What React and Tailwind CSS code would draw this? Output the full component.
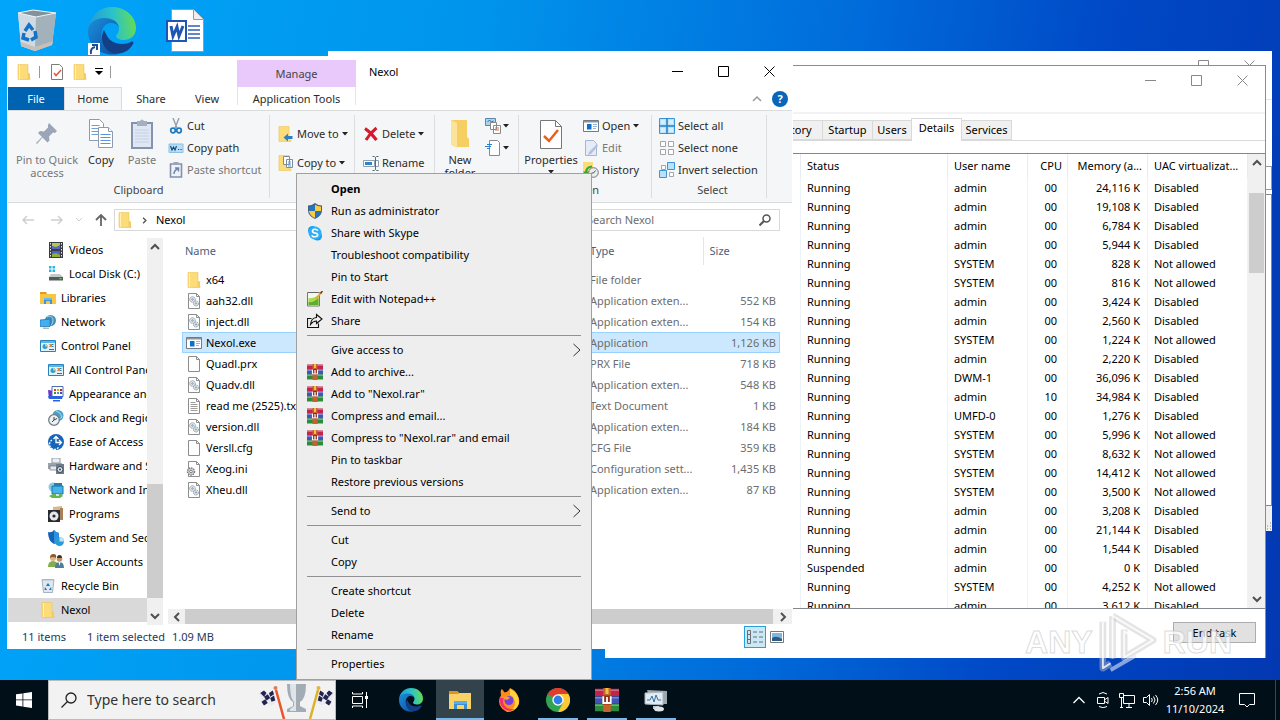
const NAV = [
  { label: "Videos",         icon: "videos",   sub: true },
  { label: "Local Disk (C:)", icon: "disk",    sub: true },
  { label: "Libraries",      icon: "libraries" },
  { label: "Network",        icon: "network" },
  { label: "Control Panel",  icon: "panel" },
  { label: "All Control Panel Items", icon: "panel", sub: true },
  { label: "Appearance and Personalization", icon: "appearance", sub: true },
  { label: "Clock and Region", icon: "clock",  sub: true },
  { label: "Ease of Access", icon: "ease",     sub: true },
  { label: "Hardware and Sound", icon: "hardware", sub: true },
  { label: "Network and Internet", icon: "internet", sub: true },
  { label: "Programs",       icon: "programs", sub: true },
  { label: "System and Security", icon: "shield2", sub: true },
  { label: "User Accounts",  icon: "users",    sub: true },
  { label: "Recycle Bin",    icon: "bin" },
  { label: "Nexol",          icon: "folder",   active: true },
];

const FILES = [
  ["x64", "folder", "File folder", ""],
  ["aah32.dll", "dll", "Application exten...", "552 KB"],
  ["inject.dll", "dll", "Application exten...", "154 KB"],
  ["Nexol.exe", "exe", "Application", "1,126 KB"],
  ["Quadl.prx", "blank", "PRX File", "718 KB"],
  ["Quadv.dll", "dll", "Application exten...", "548 KB"],
  ["read me (2525).txt", "txt", "Text Document", "1 KB"],
  ["version.dll", "dll", "Application exten...", "184 KB"],
  ["Versll.cfg", "blank", "CFG File", "359 KB"],
  ["Xeog.ini", "ini", "Configuration sett...", "1,435 KB"],
  ["Xheu.dll", "dll", "Application exten...", "87 KB"],
];

const PROCESSES = [
  ["Running", "admin", "00", "24,116 K", "Disabled"],
  ["Running", "admin", "00", "19,108 K", "Disabled"],
  ["Running", "admin", "00", "6,784 K", "Disabled"],
  ["Running", "admin", "00", "5,944 K", "Disabled"],
  ["Running", "SYSTEM", "00", "828 K", "Not allowed"],
  ["Running", "SYSTEM", "00", "816 K", "Not allowed"],
  ["Running", "admin", "00", "3,424 K", "Disabled"],
  ["Running", "admin", "00", "2,560 K", "Disabled"],
  ["Running", "SYSTEM", "00", "1,224 K", "Not allowed"],
  ["Running", "admin", "00", "2,220 K", "Disabled"],
  ["Running", "DWM-1", "00", "36,096 K", "Disabled"],
  ["Running", "admin", "10", "34,984 K", "Disabled"],
  ["Running", "UMFD-0", "00", "1,276 K", "Disabled"],
  ["Running", "SYSTEM", "00", "5,996 K", "Not allowed"],
  ["Running", "SYSTEM", "00", "8,632 K", "Not allowed"],
  ["Running", "SYSTEM", "00", "14,412 K", "Not allowed"],
  ["Running", "SYSTEM", "00", "3,500 K", "Not allowed"],
  ["Running", "admin", "00", "3,208 K", "Disabled"],
  ["Running", "admin", "00", "21,144 K", "Disabled"],
  ["Running", "admin", "00", "1,544 K", "Disabled"],
  ["Suspended", "admin", "00", "0 K", "Disabled"],
  ["Running", "SYSTEM", "00", "4,252 K", "Not allowed"],
  ["Running", "admin", "00", "3,612 K", "Disabled"],
];

const MENU = [
  { label: "Open", bold: true },
  { label: "Run as administrator", icon: "shield" },
  { label: "Share with Skype", icon: "skype" },
  { label: "Troubleshoot compatibility" },
  { label: "Pin to Start" },
  { label: "Edit with Notepad++", icon: "notepad" },
  { label: "Share", icon: "share" },
  null,
  { label: "Give access to", more: true },
  { label: "Add to archive...", icon: "rar" },
  { label: 'Add to "Nexol.rar"', icon: "rar" },
  { label: "Compress and email...", icon: "rar" },
  { label: 'Compress to "Nexol.rar" and email', icon: "rar" },
  { label: "Pin to taskbar" },
  { label: "Restore previous versions" },
  null,
  { label: "Send to", more: true },
  null,
  { label: "Cut" },
  { label: "Copy" },
  null,
  { label: "Create shortcut" },
  { label: "Delete" },
  { label: "Rename" },
  null,
  { label: "Properties" },
];

/* 16x16 drawings */
const page = <path d="M2.500.5h8l3 3v12h-11zM10.500.5v3h3" fill="#fff" stroke="#8d8d8d" />;
const gears = (
  <g fill="#e4ebf0" stroke="#8a9ba8">
    <circle cx="6.500" cy="6.500" r="2.800" strokeDasharray="1.500 .6" /><circle cx="6.500" cy="6.500" r=".8" />
    <circle cx="10" cy="10.500" r="2.500" strokeDasharray="1.500 .6" /><circle cx="10" cy="10.500" r=".7" />
  </g>
);

const ICONS = {
  folder: (
    <>
      <path d="M2 .5h10v13l2 .5v1.500H2z" fill="#fbdc79" stroke="#ecc55c" strokeWidth=".6" />
      <path d="M12 9l2 .5v6H4l8-1z" fill="#f3cb5e" /><path d="M3 1h1v14H3z" fill="#fff0b8" />
    </>
  ),
  videos: (
    <>
      <path d="M1 0h14v16H1z" fill="#3b3b45" /><path d="M4 1h8v6H4z" fill="#b6c94a" /><path d="M4 4l4 1 4-2v4H4z" fill="#5468c8" />
      <path d="M4 9h8v6H4z" fill="#4a63cf" /><path d="M4 12l4-1 4 2v2H4z" fill="#8fae3a" />
      <path d="M2.500 1v14M13.500 1v14" stroke="#e6e6e6" strokeDasharray="1.500 1.500" />
    </>
  ),
  disk: (
    <>
      <path d="M1 0h2.500v2.500H1zM4.500 0H7v2.500H4.500zM1 3.500h2.500V6H1zM4.500 3.500H7V6H4.500z" fill="#27b5e4" />
      <path d="M3 8h9l3 3H1z" fill="#c4c8cb" /><path d="M1 11h14v3.500H1z" fill="#55595c" /><path d="M11.500 12h2v1.200h-2z" fill="#56e04b" />
    </>
  ),
  libraries: (
    <>
      <path d="M0 2h6l1 2h9v10H0z" fill="#f8c645" /><path d="M0 2h6l1 2H0z" fill="#e29a25" />
      <path d="M4 8h8v6h-2v-3H6v3H4z" fill="#3f94d8" /><path d="M4 8h8v2H4z" fill="#6bb8ec" />
    </>
  ),
  network: (
    <>
      <circle cx="10.500" cy="6.500" r="5.500" fill="#3f8fbf" /><path d="M7 3c3-2 6 0 6 3s-1 4-2 5" fill="none" stroke="#a5d4ea" />
      <path d="M0 6l10-1v7.500L0 12.500z" fill="#45aef0" stroke="#1d6fae" strokeWidth=".7" /><path d="M3 13.500l6 .3v1H3z" fill="#8aa4b4" />
    </>
  ),
  panel: (
    <>
      <path d="M.5 2.500h15v11H.5z" fill="#dff1fb" stroke="#2a81b8" /><path d="M1 3h14v2H1z" fill="#58b7e8" />
      <circle cx="5" cy="8.500" r="2.500" fill="#2c9bd8" /><path d="M5 6v2.500h2.500A2.500 2.500 0 0 0 5 6" fill="#f4c74a" />
      <path d="M9.500 6.500h4M9.500 8.500h4M9 11.500h5" stroke="#2378b0" /><path d="M11 6v3" stroke="#e88836" strokeWidth="2" />
    </>
  ),
  appearance: (
    <>
      <path d="M0 4l7 1v8H1z" fill="#6a35c8" /><path d="M4 .5h11v10H4z" fill="#fff" stroke="#4d6fa8" />
      <path d="M6 3h2v2H6z" fill="#e33" /><path d="M9 3h2v2H9z" fill="#f90" /><path d="M12 3h2v2h-2z" fill="#933" /><path d="M6 6h2v2H6z" fill="#393" />
      <path d="M9 6h2v2H9z" fill="#39c" /><path d="M12 6h2v2h-2z" fill="#63c" /><path d="M0 10h15l-1 3H1zM5 14h7v1.500H5z" fill="#2c62e0" />
    </>
  ),
  clock: (
    <>
      <circle cx="10" cy="5.500" r="5.500" fill="#4c9fc9" /><path d="M8 1l4 2 2 4-3 2" fill="none" stroke="#a6dcee" />
      <circle cx="6" cy="10" r="5.300" fill="#eef1f4" stroke="#747d86" strokeWidth="1.300" /><path d="M6 7v3l3-1.500M6 10l-2 2" fill="none" stroke="#33404c" />
    </>
  ),
  ease: (
    <>
      <circle cx="8" cy="8" r="8" fill="#1566b8" /><path d="M8 2.500v6h5M11 6l2.500 2.500L11 11M5.500 5L8 2.500 10.500 5" fill="none" stroke="#fff" strokeWidth="1.300" />
      <path d="M4 6a5 5 0 1 0 7 6.500" fill="none" stroke="#fff" strokeWidth="1.300" strokeDasharray="2 1" />
    </>
  ),
  hardware: (
    <>
      <path d="M4 0h8v5H4z" fill="#eceff2" stroke="#8d99a4" /><path d="M0 5h14v6H0z" fill="#9aa3ab" /><path d="M2 8h8v4H2z" fill="#e7eaed" stroke="#6d767e" strokeWidth=".7" />
      <path d="M8 6h8v10H8z" fill="#6f7b87" /><circle cx="12" cy="11.500" r="3" fill="#cfe4f2" stroke="#39444e" /><circle cx="12" cy="11.500" r="1" fill="#39444e" />
    </>
  ),
  internet: (
    <>
      <circle cx="5" cy="5" r="4.500" fill="#8ccbe8" /><path d="M4 4h11v8H4z" fill="#45b4ea" stroke="#1973a8" /><path d="M6 1h8v3H6z" fill="#2e7ca8" />
      <path d="M1 14l4-2h8l2 2-3 2H4z" fill="#63b84c" /><path d="M8 12h3v2H8z" fill="#d7dde2" />
    </>
  ),
  programs: (
    <>
      <path d="M5 1l9-1v13l-3 1H5z" fill="#d9b98c" /><path d="M12 2h3v12h-3z" fill="#a9805a" /><path d="M0 4h12v12H0z" fill="#272b2f" />
      <circle cx="6" cy="10" r="4.500" fill="#e4e8ec" /><circle cx="6" cy="10" r="1.600" fill="#272b2f" />
    </>
  ),
  shield2: (
    <>
      <path d="M0 2q4 1 6-2 2 3 5 3v5q-1 5-5 6Q0 11 0 2" fill="#1263b5" /><path d="M6 0q2 3 5 3v5q-1 5-5 6z" fill="#2f8fdf" />
      <circle cx="11.500" cy="11.500" r="4.500" fill="#2a9bd5" /><path d="M11.500 11.500V7a4.500 4.500 0 0 1 4.500 4.500z" fill="#bfe4f6" />
    </>
  ),
  users: (
    <>
      <circle cx="5" cy="4" r="3" fill="#e4b283" /><path d="M2 4q0-4 3.500-4T8 4q-3-2-6 0" fill="#8a5a2b" /><path d="M0 13q0-6 5-6t5 6z" fill="#7fb04a" />
      <circle cx="11.500" cy="5" r="2.800" fill="#c98f63" /><path d="M9 4q0-3 2.500-3T14 4z" fill="#3d3029" /><path d="M7 14q0-6 4.500-6t4.500 6z" fill="#4f7d9c" /><path d="M10.500 8h2l-1 4z" fill="#fff" />
    </>
  ),
  bin: (
    <>
      <path d="M2 1.500h12l-1.500 13h-9z" fill="#dfe8ee" stroke="#8fa3b0" strokeWidth=".8" /><path d="M2 1h12v1.500H2z" fill="#a9bac5" />
      <path d="M8 5l2 3H6zM5 9l2 3H4.500zM11 9l-2 3h2.500z" fill="#1c72c4" />
    </>
  ),
  dll: <>{page}{gears}</>,
  blank: page,
  txt: <>{page}<path d="M4.500 4.500h5M4.500 6.500h7M4.500 8.500h7M4.500 10.500h7M4.500 12.500h7" stroke="#9c9c9c" /></>,
  ini: <>{page}<circle cx="5" cy="10.500" r="3.500" fill="#d4d4d4" stroke="#7c7c7c" strokeWidth="1.500" strokeDasharray="1.500 .8" /><circle cx="5" cy="10.500" r="1.300" fill="#fff" stroke="#7c7c7c" /></>,
  exe: (
    <>
      <path d="M.5 2.500h15v11H.5z" fill="#fff" stroke="#6f7b85" /><path d="M1 3h14v1.500H1z" fill="#8894a0" />
      <path d="M4 6h4.500v5.500H4z" fill="#0d6fc9" /><path d="M10 6.500h4M10 8.500h4M10 10.500h3" stroke="#8db8dc" />
    </>
  ),
  shield: (
    <>
      <path d="M8 0q3 2.500 7 2.500V7q0 6-7 9-7-3-7-9V2.500Q5 2.500 8 0" fill="#3c5e82" />
      <path d="M8 1.500V8H2V3.500Q5.500 3.500 8 1.500M14 8q0 4.500-6 7V8z" fill="#2873bd" /><path d="M8 1.500q2.500 2 6 2V8H8zM2 8h6v7Q2.500 12.500 2 8" fill="#fbcb3e" />
    </>
  ),
  skype: (
    <>
      <rect x="1" y="1" width="9" height="9" rx="4.500" fill="#1a9bf0" /><rect x="6" y="6.500" width="9" height="9" rx="4.500" fill="#1a9bf0" /><circle cx="8" cy="8" r="6.500" fill="#2fb0f5" />
      <path d="M10.800 5.700Q10 4.300 8 4.300 5.500 4.300 5.500 6T8 8t2.700 1.900T8 11.700 5.200 10.200" fill="none" stroke="#fff" strokeWidth="1.600" />
    </>
  ),
  notepad: (
    <>
      <path d="M.5 1.500h12v13.500H.5z" fill="#f4f7ef" stroke="#777" /><path d="M1.500 7q4 1 10-3v10h-10z" fill="#a6dc4c" /><path d="M1.500 11q5 1 10-4v7h-10z" fill="#5eae2c" />
      <path d="M1.500 1.500h10" stroke="#555" strokeDasharray="1 1" /><path d="M14.500 1L9 8" stroke="#e9a33b" strokeWidth="2" /><path d="M15.500 0l-2 2.500" stroke="#55402b" strokeWidth="1.500" />
    </>
  ),
  share: <path d="M4.500 5.500h-4v9h11v-4M9.500 1.500l5.500 4.500-5.500 4.500V8Q6 8 3.500 11.500 4 5 9.500 4.500z" fill="none" stroke="#111" strokeWidth="1.100" />,
  rar: (
    <>
      <path d="M0 .5h16v5H0z" fill="#c2244c" /><path d="M0 5.500h16v5H0z" fill="#4254b4" /><path d="M0 10.500h16v5H0z" fill="#2b8c3c" />
      <path d="M0 1.500h16M0 6.500h16M0 11.500h16" stroke="#fff" strokeOpacity=".3" /><path d="M5.500 0h5v16h-5z" fill="#c8622c" />
      <path d="M5 5h6v6H5z" fill="#8c2d16" /><path d="M5.500 5.500v4.500h5V5.500M8 6v4" fill="none" stroke="#fff" strokeWidth="1.200" /><path d="M7 0h2v4H7z" fill="#ecc245" />
    </>
  ),
  cut: (
    <>
      <path d="M5 0l4 10M11 0L7 10" stroke="#8b9cac" strokeWidth="1.300" /><circle cx="5" cy="12.500" r="2.300" fill="none" stroke="#1b7ac4" strokeWidth="1.700" /><circle cx="11" cy="12.500" r="2.300" fill="none" stroke="#1b7ac4" strokeWidth="1.700" />
    </>
  ),
  copypath: <><path d="M1 4h14v8.500H1z" fill="#b9def5" stroke="#8cc0e4" /><path d="M2.500 6L4 10l1.500-3L7 10l1.500-4M10 9.500h1.200M12.500 9.500h1.200" fill="none" stroke="#17507c" strokeWidth="1.200" /></>,
  shortcut: <><path d="M2.500 2h11v13h-11z" fill="#eef3fa" stroke="#8391ac" strokeWidth="1.600" /><path d="M5.500 0h5v3h-5z" fill="#9aa6bd" /><path d="M6 12q0-4 4-5M7 6h3.500v3.500" fill="none" stroke="#7285aa" strokeWidth="1.500" /></>,
  moveto: <><path d="M1 .5h10v13l2 .5v1.500H1z" fill="#fbdc79" stroke="#ecc55c" strokeWidth=".6" /><path d="M14.500 11.500H9" stroke="#2b7fd0" strokeWidth="3" /><path d="M10 7.500v8L5.500 11.500z" fill="#2b7fd0" /></>,
  copyto: <><path d="M1 .5h10v13l2 .5v1.500H1z" fill="#fbdc79" stroke="#ecc55c" strokeWidth=".6" /><path d="M5.500 1.500h6v8h-6zM8.500 4.500h6v8h-6z" fill="#fff" stroke="#7e8b9a" /><path d="M10 7h3M10 9h3M10 11h3" stroke="#5f9ad4" /></>,
  del: <path d="M2 2.500q6 4 11.500 11.500M13.500 2Q7 7 3 14" fill="none" stroke="#d5182d" strokeWidth="3" />,
  rename: <><path d="M.5 5.500h11v6H.5zM11.500 5.500h4v6h-4" fill="#fff" stroke="#8fa0b0" /><path d="M2 7h7v3H2z" fill="#2f83cc" /><path d="M9.500 1.500h2l1 1 1-1h2M12.500 2v12.500M9.500 15.500h2l1-1 1 1h2" fill="none" stroke="#5a6a78" /></>,
  newitem: <><path d="M.5.500h10v7h-10z" fill="#a8d6ee" stroke="#5b87a8" /><path d="M2.500 4l2-2 2 2 2-1" fill="none" stroke="#2f6d96" /><path d="M5.500 4.500h6v7h-6zM8.500 7.500h7v8h-7z" fill="#fff" stroke="#8a8a8a" /><path d="M10 10h4M10 12h4" stroke="#c77b60" /></>,
  easy: <><path d="M4.500.500h8l2 2v13h-10z" fill="#fff" stroke="#8a8a8a" /><path d="M2 4.500h5M0 6.500h6M2 8.500h3" stroke="#2a7fc8" strokeWidth="1.200" /></>,
  edit: <><path d="M2.500.5h8l3 3v12h-11z" fill="#e6ecf7" stroke="#a9b6cf" /><path d="M14 4L6 12l-1 3 3-1 7-8z" fill="#b4c1de" /></>,
  history: <><path d="M0 0h10v13l1 2H0z" fill="#fbdc79" /><circle cx="10.500" cy="10.500" r="4.800" fill="#e9ecee" stroke="#777" /><path d="M10.500 11l2-2.500M10.500 11h-2" fill="none" stroke="#555" /><path d="M3 11q0-6 6-6.500" fill="none" stroke="#35a832" strokeWidth="2.200" /><path d="M0 9.500h6L3 14z" fill="#35a832" /></>,
  selall: <><path d="M.5.500h15v15H.5z" fill="#b9e1fa" stroke="#3c95d6" /><path d="M8 0v16M0 8h16" stroke="#2580c4" strokeWidth="1.500" /><path d="M2 2h4v4H2zM10 2h4v4h-4zM2 10h4v4H2zM10 10h4v4h-4z" fill="#d5effd" /></>,
  selnone: <path d="M1.500 1.500h5v5h-5zM9.500 1.500h5v5h-5zM1.500 9.500h5v5h-5zM9.500 9.500h5v5h-5z" fill="#fff" stroke="#a5a5a5" />,
  selinv: <><path d="M2.500 3.500h4v4h-4zM10.500 10.500h4v4h-4z" fill="#fff" stroke="#a5a5a5" /><path d="M8.500.5h7v7h-7zM.5 8.500h7v7h-7z" fill="#b9e1fa" stroke="#3c95d6" /></>,
  props: <><path d="M2.500.5h8l3 3v12h-11z" fill="#fff" stroke="#7c7c7c" /><path d="M5 9l2 2.500L12 6" fill="none" stroke="#e2543c" strokeWidth="1.500" /></>,
};

function Icon({ name, className = "w-4 h-4" }) {
  return <svg viewBox="0 0 16 16" className={"shrink-0 " + className}>{ICONS[name]}</svg>;
}

function Chevron({ d, className = "w-2.5 h-2.5", color = "#505050", width = 2 }) {
  return (
    <svg viewBox="0 0 10 10" className={"shrink-0 " + className} fill="none" stroke={color} strokeWidth={width}><path d={d} /></svg>
  );
}
const UP = "M1 7l4-4 4 4";
const DOWN = "M1 3l4 4 4-4";
const LEFT = "M7 1L3 5l4 4";
const RIGHT = "M3 1l4 4-4 4";

function Caret() {
  return <svg viewBox="0 0 6 4" className="w-1.5 h-1 shrink-0"><path d="M0 0h6L3 3.500z" fill="#222" /></svg>;
}

function CaptionButtons({ color = "#000" }) {
  const shapes = [
    ["Minimize", "M0 5.500h11"],
    ["Maximize", "M.5.500h10v10H.5z"],
    ["Close", "M.5.500l10 10M10.500.500l-10 10"],
  ];
  return (
    <div className="flex h-[29px]">
      {shapes.map(([label, d]) => (
        <button key={label} aria-label={label} className="w-[46px] flex items-center justify-center">
          <svg viewBox="0 0 11 11" className="w-[11px] h-[11px]" fill="none" stroke={color}><path d={d} /></svg>
        </button>
      ))}
    </div>
  );
}

/* ── Ribbon ── */
function Group({ label, children, className = "" }) {
  return (
    <div className={"flex flex-col my-1 border-r border-[#dcdddf] " + className}>
      <div className="flex flex-1">{children}</div>
      <div className="h-4 text-center text-[#444] leading-4">{label}</div>
    </div>
  );
}

function BigButton({ icon, children, dim, className = "" }) {
  return (
    <button className={"flex flex-col items-center leading-[13px] " + (dim ? "text-[#777] " : "") + className}>
      <span className="h-[38px] flex items-center">{icon}</span>
      <span>{children}</span>
    </button>
  );
}

function SmallButton({ icon, label, caret, dim }) {
  return (
    <button className={"flex items-center gap-[3px] h-[22px] whitespace-nowrap " + (dim ? "text-[#777]" : "")}>
      <Icon name={icon} />{label}{caret && <Caret />}
    </button>
  );
}

function Ribbon() {
  return (
    <div className="flex h-[93px] shrink-0 bg-[#f5f6f7] border-y border-[#dadbdc] text-[#2b2b2b]">
      <Group label="Clipboard" className="w-[262px]">
        <BigButton dim className="w-[78px]" icon={
          <svg viewBox="0 0 24 24" className="w-6 h-6" fill="#9aa6b8"><path d="M14 1l8 8-2 2-2-.5-4 4 .5 4-2 2-5-5L2 22l-1-1 6-6-4-4 2-2 4 .5 4-4L13 3z" /></svg>
        }>Pin to Quick access</BigButton>
        <BigButton className="w-[30px]" icon={
          <svg viewBox="0 0 26 30" className="w-[26px] h-[30px]" fill="#fff" stroke="#8f9bab">
            <path d="M1.500.5h10l4 4v17h-14z" /><path d="M3.500 6.500h8M3.500 9.500h8M3.500 12.500h8M3.500 15.500h8" stroke="#6ea0da" />
            <path d="M10.500 8.500h10l4 4v16h-14z" /><path d="M20.500 8.500v4h4" /><path d="M12.500 15.500h10M12.500 18.500h10M12.500 21.500h10M12.500 24.500h10" stroke="#5b94d8" />
          </svg>
        }>Copy</BigButton>
        <BigButton dim className="w-[52px]" icon={
          <svg viewBox="0 0 22 30" className="w-[22px] h-[30px]">
            <path d="M1 4h20v25H1z" fill="#dfe7f3" stroke="#8594ae" strokeWidth="2" /><path d="M6 2h3q2-3 4 0h3v5H6z" fill="#a5afc2" />
            <path d="M4 11h14M4 14h14M4 17h14M4 20h14M4 23h14" stroke="#c3d0e4" />
          </svg>
        }>Paste</BigButton>
        <div>
          <SmallButton icon="cut" label="Cut" />
          <SmallButton icon="copypath" label="Copy path" />
          <SmallButton icon="shortcut" label="Paste shortcut" dim />
        </div>
      </Group>
      <Group label="Organize" className="w-[165px]">
        <div className="flex flex-col gap-[7px] pt-2 pl-2 w-[85px] border-r border-[#dcdddf]">
          <SmallButton icon="moveto" label="Move to" caret />
          <SmallButton icon="copyto" label="Copy to" caret />
        </div>
        <div className="flex flex-col gap-[7px] pt-2 pl-2">
          <SmallButton icon="del" label="Delete" caret />
          <SmallButton icon="rename" label="Rename" />
        </div>
      </Group>
      <Group label="New" className="w-[84px]">
        <BigButton className="w-[50px]" icon={
          <svg viewBox="0 0 20 30" className="w-5 h-[30px]"><path d="M1 1h16v17l2 2v8H6z" fill="#f6cf62" /><path d="M1 1l6 3v25l-6-3z" fill="#fbe39a" /></svg>
        }>New folder</BigButton>
        <div className="flex flex-col">
          <button aria-label="New item" className="flex items-center gap-0.5 h-[22px]"><Icon name="newitem" /><Caret /></button>
          <button aria-label="Easy access" className="flex items-center gap-0.5 h-[22px]"><Icon name="easy" /><Caret /></button>
        </div>
      </Group>
      <Group label="Open" className="w-[133px]">
        <BigButton className="w-16" icon={
          <svg viewBox="0 0 22 30" className="w-[22px] h-[30px]"><path d="M.5 1.500h15l6 6v22H.5z" fill="#fff" stroke="#777" /><path d="M15.500 1.500v6h6" fill="none" stroke="#777" /><path d="M4 17l5 5 9-11" fill="none" stroke="#e8601c" strokeWidth="2.500" /></svg>
        }><span className="flex flex-col items-center gap-1">Properties<Caret /></span></BigButton>
        <div>
          <SmallButton icon="exe" label="Open" caret />
          <SmallButton icon="edit" label="Edit" dim />
          <SmallButton icon="history" label="History" />
        </div>
      </Group>
      <Group label="Select" className="w-[115px] pl-[7px]">
        <div>
          <SmallButton icon="selall" label="Select all" />
          <SmallButton icon="selnone" label="Select none" />
          <SmallButton icon="selinv" label="Invert selection" />
        </div>
      </Group>
    </div>
  );
}

function ExplorerHeader() {
  return (
    <div className="flex h-[54px] shrink-0">
      <div className="flex flex-col w-[229px]">
        <div className="flex items-center gap-[7px] h-[31px] pl-2 text-[#999]">
          <Icon name="folder" /><span className="w-px h-3 bg-[#999]" />
          <Icon name="props" className="w-4 h-4 ml-0.5" /><Icon name="folder" />
          <svg viewBox="0 0 8 7" className="w-2 h-[7px]"><path d="M0 .5h8" stroke="#000" /><path d="M0 3h8L4 7z" /></svg>
          <span className="w-px h-3 bg-[#999]" />
        </div>
        <div className="flex h-6 -mb-px text-[#2b2b2b]">
          <button className="w-14 bg-[#0063b1] text-white mb-px">File</button>
          <button className="w-[58px] pb-px bg-[#f5f6f7] border border-b-0 border-[#dadbdc]">Home</button>
          <button className="w-[58px]">Share</button>
          <button className="w-[54px]">View</button>
        </div>
      </div>
      <div className="flex flex-col w-[119px] pt-1">
        <div className="h-[27px] bg-[#e9c9fb] flex items-center justify-center text-[#444]">Manage</div>
        <button className="h-[18px] border-x border-[#e4e4e4] pt-1.5 text-[#2b2b2b] leading-3 whitespace-nowrap">Application Tools</button>
      </div>
      <div className="flex flex-col flex-1">
        <div className="flex justify-between items-center pl-[13px] h-[31px]">
          <span className="text-black">Nexol</span>
          <CaptionButtons />
        </div>
        <div className="flex justify-end items-center gap-2.5 h-[23px] pr-1">
          <Chevron d={UP} color="#999" width={1.5} />
          <button aria-label="Help" className="w-4 h-4 rounded-full bg-[#0a64b8] text-white font-bold leading-4">?</button>
        </div>
      </div>
    </div>
  );
}

function AddressBar() {
  return (
    <div className="flex items-center h-[34px] shrink-0 pl-3.5">
      <div className="flex items-center gap-[13px] w-[92px]">
        <svg viewBox="0 0 12 10" className="w-3 h-2.5" fill="none" stroke="#cfcfcf" strokeWidth="1.500"><path d="M12 5H1M5 1L1 5l4 4" /></svg>
        <svg viewBox="0 0 12 10" className="w-3 h-2.5 ml-1" fill="none" stroke="#cfcfcf" strokeWidth="1.500"><path d="M0 5h11M7 1l4 4-4 4" /></svg>
        <svg viewBox="0 0 6 4" className="w-1.5 h-1" fill="none" stroke="#ccc"><path d="M0 0l3 3 3-3" /></svg>
        <svg viewBox="0 0 12 12" className="w-3 h-3" fill="none" stroke="#666" strokeWidth="1.800"><path d="M6 12V1.500M1 6l5-5 5 5" /></svg>
      </div>
      <div className="flex items-center gap-2 flex-1 h-[22px] border border-[#d9d9d9] pl-0.5 text-black">
        <Icon name="folder" /><Chevron d={RIGHT} className="w-[7px] h-[7px]" width={1.8} /><span>Nexol</span>
      </div>
      <label className="flex items-center w-[202px] h-[22px] border border-[#d9d9d9] mx-3 px-2">
        <input aria-label="Search Nexol" placeholder="Search Nexol" className="flex-1 min-w-0 outline-none placeholder:text-[#6d6d6d]" />
        <svg viewBox="0 0 12 12" className="w-3 h-3" fill="none" stroke="#555" strokeWidth="1.500"><circle cx="7.500" cy="4.500" r="3.500" /><path d="M5 7l-4.500 4.500" strokeWidth="2" /></svg>
      </label>
    </div>
  );
}

function NavPane() {
  return (
    <nav className="flex w-[155px] shrink-0 pt-px">
      <div className="flex-1 overflow-hidden text-black">
        {NAV.map(n => (
          <a key={n.label} href="#" className={"flex items-center gap-[5px] h-6 whitespace-nowrap " + (n.sub ? "pl-10 " : "pl-8 ") + (n.active ? "bg-[#d9d9d9]" : "")}>
            <Icon name={n.icon} />{n.label}
          </a>
        ))}
      </div>
      <div className="w-4 bg-[#f0f0f0] flex flex-col items-center">
        <button aria-label="Scroll up" className="h-[18px] flex items-center"><Chevron d={UP} /></button>
        <div className="w-full mt-auto h-[114px] bg-[#cdcdcd]" />
        <button aria-label="Scroll down" className="h-[27px] flex items-end pb-1"><Chevron d={DOWN} /></button>
      </div>
    </nav>
  );
}

function FileList() {
  return (
    <div className="flex flex-col flex-1 min-w-0 pl-[5px]">
      <div className="flex-1 overflow-hidden pl-3.5">
        <table className="w-[598px] table-fixed border-collapse">
          <thead>
            <tr className="h-[28px] text-left text-[#4c607a]">
              <th className="font-normal pl-[3px]">Name</th>
              <th className="font-normal w-[117px] pl-1 border-r border-[#e5e5e5]">Type</th>
              <th className="font-normal w-[77px] pl-1.5">Size</th>
            </tr>
          </thead>
          <tbody>
            <tr className="h-1" />
            {FILES.map(([name, icon, type, size]) => (
              <tr key={name} className={"h-[21px] " + (icon === "exe" ? "bg-[#cce8ff] outline outline-[#99d1ff] -outline-offset-1" : "")}>
                <td className="p-0 pl-1 text-black"><span className="flex items-center gap-1"><Icon name={icon} />{name}</span></td>
                <td className="p-0 pl-1 text-[#6d6d6d] whitespace-nowrap">{type}</td>
                <td className="p-0 pr-1 text-right text-[#6d6d6d] whitespace-nowrap">{size}</td>
              </tr>
            ))}
          </tbody>
        </table>
      </div>
      <div className="flex items-center h-[15px] mb-px bg-[#f0f0f0]">
        <button aria-label="Scroll left" className="w-[17px] flex justify-center"><Chevron d={LEFT} /></button>
        <div className="flex-1 h-full bg-[#cdcdcd]" />
        <button aria-label="Scroll right" className="w-[19px] flex justify-center"><Chevron d={RIGHT} /></button>
      </div>
    </div>
  );
}

function Explorer() {
  return (
    <section className="absolute left-[7px] right-[487px] top-14 bottom-[31px] flex flex-col bg-white px-px">
      <ExplorerHeader />
      <Ribbon />
      <AddressBar />
      <div className="flex flex-1 min-h-0">
        <NavPane />
        <FileList />
      </div>
      <footer className="flex items-center h-6 shrink-0 pl-3.5 text-[#1e395b]">
        <span className="w-[65px]">11 items</span>
        <span className="w-[85px] whitespace-nowrap">1 item selected</span>
        <span>1.09 MB</span>
        <div className="ml-auto mr-2 flex items-center gap-1">
          <button aria-label="Details view" className="w-[22px] h-[22px] border border-[#26a0da] bg-[#cbe8f6] flex items-center justify-center">
            <svg viewBox="0 0 16 14" className="w-4 h-3.5" fill="none" stroke="#6a6f74"><path d="M.5.500h3v13h-3zM.5 4.500h3M.5 9.500h3M6 2h4M12 2h4M6 7h4M12 7h4M6 12h4M12 12h4" /></svg>
          </button>
          <button aria-label="Thumbnail view">
            <svg viewBox="0 0 14 12" className="w-3.5 h-3 block"><path d="M.5.500h13v11H.5z" fill="#fff" stroke="#777" /><path d="M2 2h10v8H2z" fill="#7db8e2" /><path d="M2 7q4-3 10 1v2H2z" fill="#2f5c80" /></svg>
          </button>
        </div>
      </footer>
    </section>
  );
}

/* ── Task manager ── */
function TaskManager() {
  const tab = "h-5 border border-l-0 border-[#d9d9d9] bg-[#f0f0f0] whitespace-nowrap";
  return (
    <section className="absolute left-[605px] right-[14px] top-[65px] bottom-[22px] flex flex-col bg-white border-t border-r border-[#8c8c8c] text-black">
      <div className="flex justify-end h-[48px] border-b-2 border-[#f3f3f3] shrink-0"><CaptionButtons color="#888" /></div>
      <div className="flex items-end h-[27px] pl-[137px] border-b border-[#d9d9d9] shrink-0">
        <button className={tab + " w-[81px]"}>App history</button>
        <button className={tab + " w-[50px]"}>Startup</button>
        <button className={tab + " w-[38px] border-r-0"}>Users</button>
        <button className="w-[51px] h-[23px] -mb-px pb-1 bg-white border border-b-0 border-[#d9d9d9]">Details</button>
        <button className={tab + " w-[50px]"}>Services</button>
      </div>
      <div className="flex flex-1 min-h-0 mt-3 border-y border-[#828790]">
        <div className="flex-1 overflow-hidden flex justify-end">
          <table className="w-[448px] h-max table-fixed border-collapse">
            <thead>
              <tr className="h-6 text-left">
                <th className="font-normal border-l border-[#e6ebf5] pl-1.5">Status</th>
                <th className="font-normal w-20 border-l border-[#e6ebf5] pl-1.5">User name</th>
                <th className="font-normal w-10 border-l border-[#e6ebf5] text-right pr-[5px]">CPU</th>
                <th className="font-normal w-20 border-l border-[#e6ebf5] text-right pr-[5px] whitespace-nowrap">Memory (a...</th>
                <th className="font-normal w-[100px] border-x border-[#e6ebf5] pl-1.5 whitespace-nowrap">UAC virtualizat...</th>
              </tr>
            </thead>
            <tbody>
              {PROCESSES.map(([status, user, cpu, mem, uac], i) => (
                <tr key={i} className="h-[19px]">
                  <td className="p-0 pl-1.5 border-l border-[#eef2f9]">{status}</td>
                  <td className="p-0 pl-1.5 border-l border-[#eef2f9]">{user}</td>
                  <td className="p-0 pr-2.5 border-l border-[#eef2f9] text-right">{cpu}</td>
                  <td className="p-0 pr-[7px] border-l border-[#eef2f9] text-right">{mem}</td>
                  <td className="p-0 pl-1.5 border-x border-[#eef2f9]">{uac}</td>
                </tr>
              ))}
            </tbody>
          </table>
        </div>
        <div className="w-[17px] bg-[#f0f0f0] flex flex-col items-center">
          <button aria-label="Scroll up" className="h-[39px] flex pt-1"><Chevron d={UP} /></button>
          <div className="w-[15px] h-20 bg-[#cdcdcd]" />
          <button aria-label="Scroll down" className="mt-auto mb-1"><Chevron d={DOWN} /></button>
        </div>
      </div>
      <div className="flex justify-end items-start h-[49px] shrink-0 pt-[13px] pr-[9px]">
        <button className="w-[83px] h-[21px] leading-[18px] bg-[#e1e1e1] border border-[#adadad]">End task</button>
      </div>
    </section>
  );
}

function BackWindow() {
  return (
    <section className="absolute left-[328px] right-2 top-[51px] bottom-[149px] bg-white flex flex-col">
      <div className="flex justify-end h-[49px] border-b border-[#e5e5e5]"><CaptionButtons color="#888" /></div>
      <div className="mt-[66px] h-6 border border-[#999]" />
      <div className="mt-1 flex-1 border border-[#828790]" />
      <div className="h-[25px] bg-[#f0f0f0] flex justify-end items-end p-px">
        <svg viewBox="0 0 8 8" className="w-2 h-2"><path d="M1 7h1M4 7h1M4 4h1M7 7h1M7 4h1M7 1h1" stroke="#aaa" strokeWidth="1.500" /></svg>
      </div>
    </section>
  );
}

function ContextMenu() {
  return (
    <div role="menu" className="absolute left-[296px] top-[173px] w-[296px] bg-[#eee] border border-[#a0a0a0] py-1 text-black">
      {MENU.map((m, i) => m ? (
        <button key={m.label} role="menuitem" className={"flex items-center w-full h-[22px] px-2.5 text-left whitespace-nowrap " + (m.bold ? "font-bold" : "")}>
          <span className="w-6">{m.icon && <Icon name={m.icon} />}</span>
          {m.label}
          {m.more && <svg viewBox="0 0 8 14" className="w-2 h-3.5 ml-auto" fill="none" stroke="#333"><path d="M.5 1l6.500 6-6.500 6" /></svg>}
        </button>
      ) : (
        <div key={i} className="h-px my-[3px] mx-2.5 bg-[#919191]" />
      ))}
    </div>
  );
}

/* ── Logos ── */
function EdgeLogo({ className, id }) {
  return (
    <svg viewBox="0 0 48 48" className={className}>
      <defs>
        <linearGradient id={id + "a"} x1="0" y1=".5" x2="1" y2=".4"><stop offset="0" stopColor="#1f9ad8" /><stop offset=".55" stopColor="#2cc3c8" /><stop offset="1" stopColor="#66dd4e" /></linearGradient>
        <linearGradient id={id + "b"} x1="0" y1="0" x2="1" y2="1"><stop offset="0" stopColor="#1b8fdc" /><stop offset="1" stopColor="#0c4d9e" /></linearGradient>
      </defs>
      <path d="M0 22C2 8 12 0 24 0c14 0 24 10 24 21 0 8-6 12-12 12-5 0-8-2-8-4 0-1 3-3 3-7 0-6-6-10-14-10C8 12 2 17 0 22" fill={"url(#" + id + "a)"} />
      <path d="M0 24c0-8 8-13 16-13 10 0 15 5 15 11 0-4-4-6-8-6-7 0-11 8-9 16s9 14 16 15C14 50 0 40 0 24" fill={"url(#" + id + "b)"} />
      <path d="M16 23c-4 7-2 17 6 22 8 4 18 1 23-8 1-2 0-3-2-2-8 4-20 2-24-6-1-2-2-4-3-6" fill="#123f86" />
    </svg>
  );
}

function DesktopIcons() {
  return (
    <div className="flex items-start gap-8 pl-4 pt-[7px]">
      <a href="#" aria-label="Recycle bin">
        <svg viewBox="0 0 40 46" className="w-10 h-[46px]">
          <path d="M2 6l15-3 23 3-4 32-17 6-14-5z" fill="#c9d4dc" /><path d="M2 6l18 3-1 35-14-5z" fill="#cfdae2" /><path d="M20 9l20-3-4 32-17 6z" fill="#a3b1bb" />
          <path d="M2 6l15-3 23 3-20 4z" fill="#82919c" stroke="#eef3f6" /><path d="M5 35l14 5 18-6-1 4-17 6-14-5z" fill="#c7bfb8" />
          <path d="M9 24l4-6 4 5M8 26l-1 5 6 2M15 33l5-3-1-6" fill="none" stroke="#1672c8" strokeWidth="3.500" />
        </svg>
      </a>
      <a href="#" aria-label="Edge" className="relative">
        <EdgeLogo id="desk" className="w-12 h-12" />
        <svg viewBox="0 0 12 12" className="w-3 h-3 absolute left-0 bottom-0"><path d="M0 0h12v12H0z" fill="#fff" /><path d="M3 11q-1-6 4-7M4 2h5v5" fill="none" stroke="#1b4f8f" strokeWidth="2" /></svg>
      </a>
      <a href="#" aria-label="Word document" className="-ml-0.5">
        <svg viewBox="0 0 40 48" className="w-10 h-12">
          <path d="M5.500 2.500h22l10 10v32h-32z" fill="#fff" stroke="#9a9a9a" /><path d="M27.500 2.500v10h10" fill="#eee" stroke="#9a9a9a" />
          <path d="M22 19h12M22 23h12M22 27h12M22 31h12" stroke="#2f5fb8" strokeWidth="1.500" /><path d="M1 14h19v20H1z" fill="#fff" stroke="#1f56b4" strokeWidth="2" />
          <path d="M5 19l2 10 4-9 2 9 4-10" fill="none" stroke="#1f56b4" strokeWidth="3" />
        </svg>
      </a>
    </div>
  );
}

/* ── Taskbar ── */
const APPS = [
  { name: "Microsoft Edge", art: <EdgeLogo id="bar" className="w-6 h-6" /> },
  { name: "File Explorer", active: true, art: (
    <svg viewBox="0 0 24 22" className="w-6 h-[22px]"><path d="M1 2h8l2 2h12v16H1z" fill="#f9d36a" /><path d="M1 2h8l2 3H1z" fill="#dc9420" /><path d="M6 12h13v8h-3v-4H9v4H6z" fill="#3b8fd0" /><path d="M6 12h13v3H6z" fill="#5aaee6" /></svg>
  ) },
  { name: "Firefox", art: (
    <svg viewBox="0 0 24 24" className="w-6 h-6"><circle cx="12" cy="13.500" r="10" fill="#ff7a22" /><path d="M4 7Q3 2 5 1l3 4q4-2 5-5 5 2 7 6 4 6 1 12-4 6-11 6-4-2-7-8z" fill="#ff8a1e" /><path d="M13 1q5 2 7 6 4 7 0 12-2 3-6 4 6-6 3-12-1-3-4-4z" fill="#ffd43a" /><path d="M3 10q-1 8 6 12 5 2 9-1-8 1-11-4-2-4 0-7z" fill="#f0306a" /><circle cx="12" cy="12.500" r="4.500" fill="#7542e0" /><path d="M6 9q4-2 7 1l-3 2-3-1z" fill="#ff9a2c" /></svg>
  ) },
  { name: "Chrome", running: true, art: (
    <svg viewBox="0 0 24 24" className="w-6 h-6"><circle cx="12" cy="12" r="12" fill="#32a350" /><path d="M12 6h10.400A12 12 0 0 1 12 24l5-9z" fill="#fcc934" /><path d="M12 12L1.600 6A12 12 0 0 1 22.400 6H12z" fill="#e33b2e" /><circle cx="12" cy="12" r="5.700" fill="#fff" /><circle cx="12" cy="12" r="4.400" fill="#2f7de8" /></svg>
  ) },
  { name: "WinRAR", running: true, art: <Icon name="rar" className="w-6 h-6" /> },
  { name: "Task Manager", running: true, art: (
    <svg viewBox="0 0 24 24" className="w-6 h-6"><path d="M3 2l20 1v13H7z" fill="#9ca7af" /><path d="M1 5l18-1v13L1 16z" fill="#e3eaf0" stroke="#a9b4bc" /><path d="M3 12h3l2-4 2 6 2-7 2 5h3" fill="none" stroke="#2b74a8" /><path d="M9 18h6v3H9z" fill="#bcc6cd" /><ellipse cx="15" cy="21" rx="5" ry="2.500" fill="#dde3e8" /></svg>
  ) },
];

const flag = (
  <>
    <path d="M0 4l4-2 3 3 4-3 3 9-4 3-3-2-4 2z" fill="#e9e9f2" />
    <path d="M1 4l3-2 2 2-2 3zM8 4l3-2 1 3-3 2zM4 7l3-2 2 3-3 2zM2 11l3-2 2 3-3 2zM9 8l3-2 1 4-3 1z" fill="#23234e" />
  </>
);

function Taskbar() {
  return (
    <footer className="flex h-10 shrink-0 bg-[#010f18] text-white">
      <button aria-label="Start" className="w-12 flex items-center justify-center">
        <svg viewBox="0 0 16 16" className="w-4 h-4" fill="#fff"><path d="M0 2.300L6.500 1.400v6.100H0zM7.300 1.300L16 0v7.500H7.300zM0 8.300h6.500v6.200L0 13.600zM7.300 8.300H16V16l-8.700-1.300z" /></svg>
      </button>
      <label className="flex items-center w-72 bg-[#f2f2f2] border border-[#bbb] pl-3 text-[#333]">
        <svg viewBox="0 0 16 16" className="w-4 h-4" fill="none" stroke="#222" strokeWidth="1.300"><circle cx="10" cy="6" r="5" /><path d="M6.500 9.500L.5 15.500" /></svg>
        <input placeholder="Type here to search" aria-label="Type here to search" className="flex-1 min-w-0 ml-2.5 text-sm outline-none placeholder:text-[#333]" />
        <svg viewBox="0 0 76 38" className="w-[76px] h-[38px]">
          <path d="M17 9l8 29" stroke="#e8542c" strokeWidth="2.500" /><path d="M59 9l-8 29" stroke="#dcb22a" strokeWidth="2.500" />
          <g transform="translate(0 7) scale(1.250)">{flag}</g><g transform="translate(75 7) scale(-1.250 1.250)">{flag}</g>
          <circle cx="16.500" cy="7" r="2" fill="#e07c54" /><circle cx="59.500" cy="7" r="2" fill="#e3b24a" />
          <path d="M28 3h19q0 15-6 18v4l6 3v3H28v-3l6-3v-4q-6-3-6-18" fill="#a3acb5" /><path d="M31 3h6v27h-6v-2l4-3v-4q-4-4-4-18" fill="#dfe4e8" />
        </svg>
      </label>
      <button aria-label="Task view" className="w-12 flex items-center justify-center mr-[3px]">
        <svg viewBox="0 0 16 16" className="w-4 h-4" fill="none" stroke="#fff"><path d="M.5 4.500h10v7H.5zM.5 0v2h10V0M.5 16v-2h10v2M14.500 0v16" /><path d="M13 4h3v3h-3z" fill="#fff" stroke="none" /></svg>
      </button>
      <div className="flex gap-px">
        {APPS.map(a => (
          <button key={a.name} aria-label={a.name} className={"w-12 flex flex-col items-center " + (a.active ? "bg-[#33434b]" : "")}>
            <span className="flex-1 flex items-center">{a.art}</span>
            {a.active && <span className="w-full h-0.5 -mt-0.5 bg-[#76b9ed]" />}
            {a.running && <span className="w-10 h-0.5 -mt-0.5 bg-[#76b9ed]" />}
          </button>
        ))}
      </div>
      <div className="flex items-center ml-auto">
        <div className="flex items-center gap-2">
          <svg viewBox="0 0 16 16" className="w-4 h-4" fill="none" stroke="#fff" strokeWidth="1.300"><path d="M2.500 11L8 5.500l5.500 5.500" /></svg>
          <svg viewBox="0 0 16 16" className="w-4 h-4" fill="none" stroke="#fff"><path d="M2.500 5.500h7v6h-7zM10 7.500l3-2v6l-3-2M4 2q4-3 8 0M4 14.500q4 2.500 8 0" /></svg>
          <svg viewBox="0 0 16 16" className="w-4 h-4" fill="none" stroke="#fff"><path d="M4.500 3.500h11v8h-11zM10 12v3M7 15.500h6M.5 1.500h4v4h-4zM2.500 6v9M1 15.500h3" /></svg>
          <svg viewBox="0 0 16 16" className="w-4 h-4" fill="none" stroke="#fff"><path d="M.5 5.500h3l3-3v11l-3-3h-3zM8.500 6q1.500 2 0 4M10.500 4.500q3 3.500 0 7M12.500 3q4.500 5 0 10" /></svg>
        </div>
        <div className="w-[72px] text-center leading-[18px]">2:56 AM<br />11/10/2024</div>
        <button aria-label="Notifications" className="ml-2 mr-5">
          <svg viewBox="0 0 16 16" className="w-4 h-4 block" fill="none" stroke="#fff"><path d="M.5 1.500h15v11h-5L8 15l-2.500-2.500h-5z" /></svg>
        </button>
        <span className="w-px h-10 mr-1 bg-[#3b444c]" />
      </div>
    </footer>
  );
}

function Watermark() {
  const word = "text-[32px] leading-8 font-bold font-['Liberation_Sans_Narrow','Liberation_Sans',sans-serif] text-white/70 [-webkit-text-stroke:1px_rgba(190,190,190,0.55)]";
  return (
    <div className="absolute right-12 bottom-[8px] flex items-center gap-1.5 pointer-events-none">
      <span className={word}>ANY</span>
      <svg viewBox="0 0 60 62" className="w-[58px] h-[60px]" fill="none" strokeLinejoin="round">
        <g stroke="#c4c4c4" strokeOpacity=".45" strokeWidth="7"><path d="M14 4l42 25-30 18V18" /><path d="M14 4v44M4 10v48l8-5" /></g>
        <path d="M14 4l42 25-30 18V20l18 10M14 4v44M4 10v48l8-5" stroke="#fff" strokeOpacity=".8" strokeWidth="2" />
        <path d="M12 60l26-15" stroke="#dfe7f7" strokeOpacity=".6" strokeWidth="4" />
      </svg>
      <span className={word}>RUN</span>
    </div>
  );
}

export default function App() {
  return (
    <div className="flex flex-col h-screen overflow-hidden font-['Noto_Sans','Open_Sans',sans-serif] text-[11px] leading-4">
      <main className="relative flex-1 bg-[linear-gradient(100deg,#00a6fa_0%,#0094ec_35%,#006bda_62%,#0048c6_80%,#0338b2_100%)]">
        <DesktopIcons />
        <BackWindow />
        <TaskManager />
        <Explorer />
        <ContextMenu />
        <Watermark />
      </main>
      <Taskbar />
    </div>
  );
}
